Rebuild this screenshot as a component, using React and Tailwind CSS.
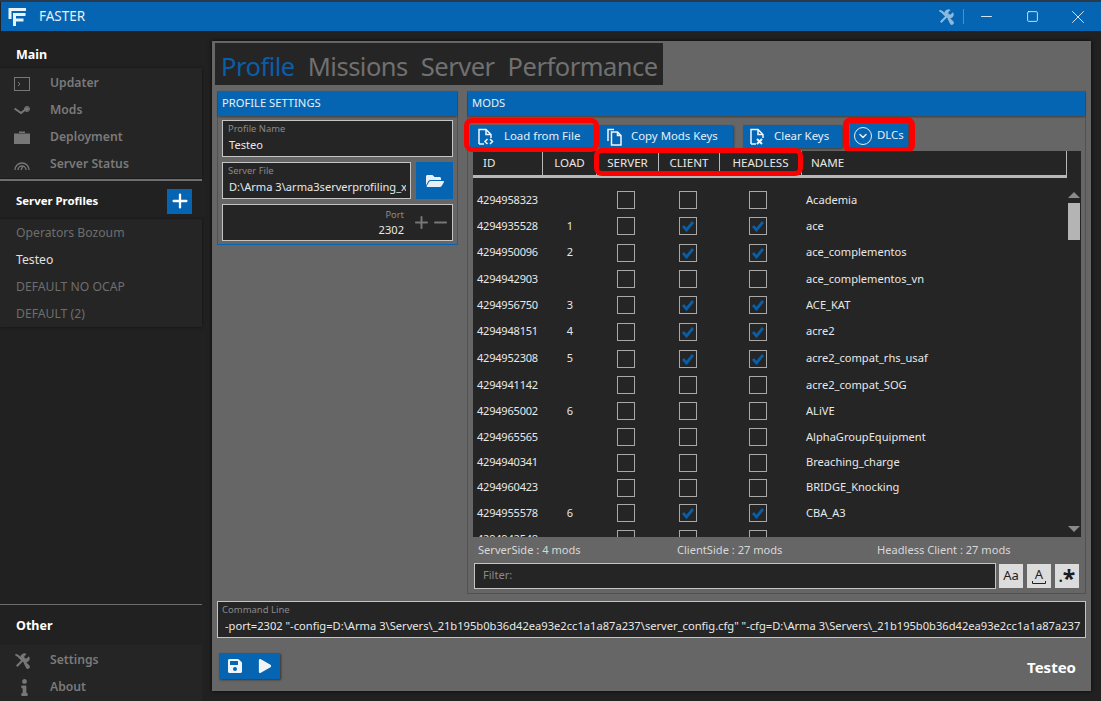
import { FaSave, FaPlay, FaFolderOpen, FaInfo } from "react-icons/fa";
import { Minus, Square, X, Plus, ChevronDown } from "lucide-react";

const FONT = "font-['Noto_Sans','Open_Sans',sans-serif]";

const mods = [
  { id: "4294958323", row: "h-[26px]", load: "", client: false, headless: false, name: "Academia" },
  { id: "4294935528", row: "h-[26px]", load: "1", client: true, headless: true, name: "ace" },
  { id: "4294950096", row: "h-[27px]", load: "2", client: true, headless: true, name: "ace_complementos" },
  { id: "4294942903", row: "h-[26px]", load: "", client: false, headless: false, name: "ace_complementos_vn" },
  { id: "4294956750", row: "h-[26px]", load: "3", client: true, headless: true, name: "ACE_KAT" },
  { id: "4294948151", row: "h-[27px]", load: "4", client: true, headless: true, name: "acre2" },
  { id: "4294952308", row: "h-[27px]", load: "5", client: true, headless: true, name: "acre2_compat_rhs_usaf" },
  { id: "4294941142", row: "h-[26px]", load: "", client: false, headless: false, name: "acre2_compat_SOG" },
  { id: "4294965002", row: "h-[26px]", load: "6", client: false, headless: false, name: "ALiVE" },
  { id: "4294965565", row: "h-[26px]", load: "", client: false, headless: false, name: "AlphaGroupEquipment" },
  { id: "4294940341", row: "h-[25px]", load: "", client: false, headless: false, name: "Breaching_charge" },
  { id: "4294960423", row: "h-[25px]", load: "", client: false, headless: false, name: "BRIDGE_Knocking" },
  { id: "4294955578", row: "h-[26px]", load: "6", client: true, headless: true, name: "CBA_A3" },
  { id: "4294942548", row: "h-[26px]", load: "", client: false, headless: false, name: "cup_core" },
];

function ToolsIcon({ size, color }) {
  return (
    <svg width={size} height={size} viewBox="0 0 16 16" fill={color}>
      <path d="M.8 2L2 .8l3 1.4 5.2 5.2-1.6 1.6-5.2-5.2zM9.4 9.6l1.5-1.5 4.3 4.2a1.8 1.8 0 0 1-2.9 2.9z" />
      <path d="M2 12.4l5.4-5.4a4 4 0 0 1 5.2-6L10.300 3.300l.4 1.900 1.900.4 2.300-2.300a4 4 0 0 1-6 5.200L3.500 14z" />
    </svg>
  );
}

function Check({ on }) {
  return (
    <div className="w-[18px] h-[18px] border border-[#a8a8a8] flex items-center justify-center">
      {on && (
        <svg width="14" height="12" viewBox="0 0 14 12" fill="none" stroke="#0a5ea8" strokeWidth="2.8">
          <path d="M2 6l3.500 4L12 2" />
        </svg>
      )}
    </div>
  );
}

function DocIcon({ badge }) {
  return (
    <svg width="18" height="18" viewBox="0 0 18 18" fill="none" stroke="#f2f6fa" strokeWidth="1.5" className="shrink-0">
      <path d="M2 16V1.500h7l5 5V10M9 1.500v5h5M2 16h5" />
      {badge === "code" && <path d="M10.500 11l-2.500 2.500 2.500 2.500M13 11l2.500 2.500L13 16" />}
      {badge === "x" && <path d="M8 11l5 5M13 11l-5 5" strokeWidth="2" />}
    </svg>
  );
}

function CopyIcon() {
  return (
    <svg width="18" height="18" viewBox="0 0 18 18" fill="none" stroke="#f2f6fa" strokeWidth="1.5" className="shrink-0">
      <path d="M2 13V1.500h6M5.500 17V4h6l3.500 3.500V17zM11.500 4v3.500H15" />
    </svg>
  );
}

function Annotated({ className, frame, children }) {
  return (
    <div className={"relative " + className}>
      {children}
      <div className={"absolute border-[#fe0000] rounded-lg pointer-events-none " + frame} />
    </div>
  );
}

function ToolButton({ icon, label, className }) {
  return (
    <div className={"bg-[#0565b2] flex items-center text-[11.4px] text-[#e8eef5] shadow-[1px_1px_2px_rgba(0,0,0,0.4)] " + className}>
      {icon}
      <span className="-mt-[2px]">{label}</span>
    </div>
  );
}

function NavItem({ icon, label }) {
  return (
    <div className="h-[27px] flex items-center text-[#7a7a7a] text-[12.2px] font-semibold">
      <div className="w-[50px] pl-[14px] flex items-center">{icon}</div>
      <span>{label}</span>
    </div>
  );
}

function PanelHeader({ title }) {
  return (
    <div className="h-[25px] bg-[#0565b2] text-[#e8eef5] text-[11.2px] pl-[4px] flex items-center shrink-0 shadow-[0_1px_2px_rgba(0,0,0,0.4)]">
      {title}
    </div>
  );
}

function Field({ label, value, className }) {
  return (
    <div className={"h-[37px] bg-[#252525] border border-[#c4c4c4] pl-[5px] pr-[4px] overflow-hidden " + className}>
      <div className="text-[9.4px] leading-[13px] mt-[1px] text-[#8a8a8a]">{label}</div>
      <div className="text-[11.1px] leading-[17px] mt-[1px] pl-[1px] text-[#e8e8e8] whitespace-nowrap overflow-hidden">{value}</div>
    </div>
  );
}

function Sidebar() {
  return (
    <div className="w-[212px] shrink-0 flex flex-col pt-[14px]">
      <div className="h-[21px] pl-[16px] text-[12.5px] font-bold text-white flex items-center">Main</div>
      <div className="mt-[2px] w-[202px] h-[110px] bg-[#252525] pt-[2px] shadow-[0_0_3px_rgba(0,0,0,0.5)]">
        <NavItem label="Updater" icon={
          <svg width="16" height="14" viewBox="0 0 16 14" fill="none" stroke="#777" strokeWidth="1"><rect x=".5" y=".5" width="15" height="13" /><path d="M4 5l2 2-2 2" /></svg>
        } />
        <NavItem label="Mods" icon={
          <svg width="16" height="9" viewBox="0 0 16 9" fill="none" stroke="#777" strokeWidth="2"><path d="M.5 2.500L7 7l5-4" /><circle cx="13" cy="3" r="2" fill="#777" stroke="none" /><circle cx="13" cy="3" r="2.500" strokeWidth="1" /></svg>
        } />
        <NavItem label="Deployment" icon={
          <svg width="16" height="13" viewBox="0 0 16 13" fill="#777"><path d="M5 2V.500h6V2zM0 2.500h16V13H0z" /></svg>
        } />
        <NavItem label="Server Status" icon={
          <svg width="16" height="12" viewBox="0 0 16 12" fill="none" stroke="#777" strokeWidth="1.4"><path d="M1 11a7 7 0 1 1 14 0M4 11a4 4 0 0 1 8 0" /><path d="M7 11l1.500-3" /></svg>
        } />
      </div>
      <div className="mt-[1px] w-[202px] h-[2px] bg-[#6e6e6e]" />
      <div className="mt-[7px] w-[202px] h-[26px] pl-[16px] pr-[10px] flex items-center justify-between">
        <span className="text-[11.4px] font-bold text-white">Server Profiles</span>
        <div className="w-[25px] h-[25px] bg-[#0565b2] flex items-center justify-center">
          <Plus size={22} strokeWidth={2.5} color="#fff" />
        </div>
      </div>
      <div className="mt-[5px] w-[202px] h-[108px] bg-[#252525] pl-[16px] pt-[1px] text-[12.2px] text-[#6e6e6e] shadow-[0_0_3px_rgba(0,0,0,0.5)]">
        <div className="h-[27px] flex items-center">Operators Bozoum</div>
        <div className="h-[27px] flex items-center text-[#e0e0e0]">Testeo</div>
        <div className="h-[27px] flex items-center">DEFAULT NO OCAP</div>
        <div className="h-[27px] flex items-center">DEFAULT (2)</div>
      </div>
      <div className="flex-1" />
      <div className="w-[202px] h-[1px] bg-[#6e6e6e]" />
      <div className="h-[40px] pl-[16px] pt-[3px] text-[12.5px] font-bold text-white flex items-center">Other</div>
      <div className="w-[202px] h-[56px] bg-[#252525] pt-[2px]">
        <NavItem label="Settings" icon={<ToolsIcon size={16} color="#777" />} />
        <NavItem label="About" icon={<div className="pl-[2px]"><FaInfo size={17} color="#777" /></div>} />
      </div>
    </div>
  );
}

function ProfileSettings() {
  return (
    <div className="w-[241px] h-[154px] border border-t-0 border-[#0565b2] shrink-0 flex flex-col">
      <PanelHeader title="PROFILE SETTINGS" />
      <div className="px-[4px] pt-[4px] flex flex-col gap-[5px]">
        <Field label="Profile Name" value="Testeo" />
        <div className="flex gap-[5px]">
          <Field label="Server File" value="D:\Arma 3\arma3serverprofiling_x64.exe" className="flex-1 min-w-0" />
          <div className="w-[37px] h-[37px] bg-[#0565b2] flex items-center justify-center">
            <FaFolderOpen size={18} color="#e8eef5" />
          </div>
        </div>
        <div className="h-[37px] bg-[#252525] border border-[#c4c4c4] flex justify-end items-center pr-[2px]">
          <div className="text-right pr-[8px]">
            <div className="text-[9.4px] leading-[13px] text-[#8a8a8a]">Port</div>
            <div className="text-[11.1px] leading-[17px] text-[#e8e8e8]">2302</div>
          </div>
          <Plus size={19} strokeWidth={2.5} color="#777" />
          <Minus size={19} strokeWidth={2.5} color="#777" />
        </div>
      </div>
    </div>
  );
}

function ModsTable() {
  return (
    <div className="ml-[5px] mr-[4px] h-[386px] bg-[#252525] flex flex-col overflow-hidden relative text-[#e8e8e8] shrink-0">
      <div className="w-[594px] h-[27px] shrink-0 flex border-b-[3px] border-b-[#b8b8b8] border-r border-r-[#b8b8b8] text-[11.6px]">
        <div className="w-[70px] pl-[10px] border-r border-[#b8b8b8] flex items-center">ID</div>
        <div className="w-[54px] text-center border-r border-[#b8b8b8] flex items-center justify-center">LOAD</div>
        <div className="flex w-[204px]">
          <div className="w-[62px] border-r border-[#b8b8b8] flex items-center justify-center">SERVER</div>
          <div className="w-[61px] border-r border-[#b8b8b8] flex items-center justify-center">CLIENT</div>
          <div className="w-[81px] flex items-center justify-center">HEADLESS</div>
        </div>
        <div className="flex-1 pl-[9px] border-l border-[#b8b8b8] flex items-center">NAME</div>
      </div>
      <div className="flex-1 overflow-hidden pt-[9px]">
        {mods.map((m) => (
          <div key={m.id} className={"grid grid-cols-[70px_54px_58px_66px_74px_1fr] items-center " + m.row}>
            <div className="pl-[4px] text-[11px] tracking-[-0.2px]">{m.id}</div>
            <div className="text-center text-[11px]">{m.load}</div>
            <div className="flex justify-center"><Check /></div>
            <div className="flex justify-center"><Check on={m.client} /></div>
            <div className="flex justify-center"><Check on={m.headless} /></div>
            <div className="pl-[11px] text-[11.1px]">{m.name}</div>
          </div>
        ))}
      </div>
      {/* scrollbar */}
      <div className="absolute right-[1px] top-[41px] bottom-[5px] w-[13px] flex flex-col items-center">
        <div className="w-0 h-0 border-x-[6px] border-x-transparent border-b-[6px] border-b-[#8a8a8a]" />
        <div className="w-[12px] h-[37px] mt-[5px] bg-[#b4b4b4]" />
        <div className="flex-1" />
        <div className="w-0 h-0 border-x-[6px] border-x-transparent border-t-[6px] border-t-[#8a8a8a]" />
      </div>
    </div>
  );
}

function ModsPanel() {
  return (
    <div className="flex-1 h-[503px] border border-t-0 border-[#0565b2] flex flex-col relative">
      <PanelHeader title="MODS" />
      <div className="flex items-start h-[35px] pl-[2px] pt-[9px] shrink-0">
        <Annotated frame="-left-[6px] -right-[4px] -top-[7px] -bottom-[4px] border-[5px] z-10">
          <ToolButton className="h-[23px] w-[125px] pl-[7px] gap-[9px]" icon={<DocIcon badge="code" />} label="Load from File" />
        </Annotated>
        <ToolButton className="h-[23px] ml-[4px] w-[134px] pl-[7px] gap-[7px]" icon={<CopyIcon />} label="Copy Mods Keys" />
        <ToolButton className="h-[23px] ml-[10px] w-[99px] pl-[6px] gap-[7px]" icon={<DocIcon badge="x" />} label="Clear Keys" />
        <Annotated className="ml-[8px] -mt-[2px]" frame="-left-[7px] -right-[7px] -top-[6px] -bottom-[6px] border-[6px]">
          <ToolButton className="h-[24px] w-[58px] pl-[4px] pt-[2px] gap-[5px]" icon={
            <div className="w-[18px] h-[18px] rounded-full border border-[#e8eef5] flex items-center justify-center">
              <ChevronDown size={12} strokeWidth={3} color="#e8eef5" />
            </div>
          } label="DLCs" />
        </Annotated>
      </div>
      {/* red frame over the SERVER / CLIENT / HEADLESS headers */}
      <div className="absolute left-[126px] top-[57px] w-[209px] h-[28px] border-[5px] border-[#fe0000] rounded-lg z-10" />
      <ModsTable />
      <div className="h-[26px] ml-[10px] flex items-center text-[11.1px] text-[#d8d8d8] shrink-0">
        <span className="w-[199px]">ServerSide : 4 mods</span>
        <span className="w-[200px]">ClientSide : 27 mods</span>
        <span>Headless Client : 27 mods</span>
      </div>
      <div className="ml-[6px] flex h-[26px] items-center">
        <div className="w-[522px] h-[26px] bg-[#252525] border border-[#c4c4c4] pl-[8px] pb-[2px] flex items-center text-[11.1px] text-[#8a8a8a]">Filter:</div>
        <div className="w-[24px] h-[24px] ml-[3px] bg-[#dcdcdc] flex items-center justify-center text-[13px] text-[#222]">Aa</div>
        <div className="w-[24px] h-[24px] ml-[4px] bg-[#dcdcdc] flex flex-col items-center justify-center text-[13px] leading-[13px] text-[#222]">
          <span>A</span>
          <svg width="14" height="3" viewBox="0 0 14 3" fill="none" stroke="#222"><path d="M.5 0v2.500h13V0" /></svg>
        </div>
        <div className="w-[24px] h-[24px] ml-[4px] bg-[#dcdcdc] flex items-center justify-center font-bold text-[#1c1c1c]">
          <span className="text-[14px] leading-[14px] self-end mb-[4px]">.</span>
          <span className="text-[23px] leading-[23px] mt-[5px]">*</span>
        </div>
      </div>
    </div>
  );
}

export default function App() {
  return (
    <div className={"w-[1101px] h-[701px] bg-[#212121] flex flex-col overflow-hidden " + FONT}>
      <div className="h-[2px] bg-[#2a3a48] shrink-0" />
      <div className="h-[29px] ml-[1px] bg-[#0565b2] flex items-center shrink-0 text-white">
        <svg width="20" height="20" viewBox="0 0 20 20" className="ml-[7px]" fill="none" stroke="#eaf2f9" strokeWidth="3">
          <path d="M2 12V2.500h16M6.500 19V7.500h11M6.500 13h9" />
        </svg>
        <span className="ml-[11px] text-[13.5px] text-[#e8eef5]">FASTER</span>
        <div className="flex-1" />
        <ToolsIcon size={16} color="#8db9dc" />
        <div className="ml-[9px] w-[1px] h-[15px] bg-[#4d8fc6]" />
        <Minus size={17} strokeWidth={1.3} color="#e8eef5" className="ml-[14px]" />
        <Square size={13} strokeWidth={1.6} color="#e8eef5" className="ml-[31px]" />
        <X size={22} strokeWidth={1} color="#e8eef5" className="ml-[28px] mr-[12px]" />
      </div>
      <div className="flex-1 flex min-h-0">
        <Sidebar />
        <div className="mt-[10px] mb-[10px] w-[879px] bg-[#666] flex flex-col pl-[3px] pt-[2px] pr-[5px] shadow-[0_0_4px_rgba(0,0,0,0.8)]">
          <div className="w-[448px] h-[42px] bg-[#252525] flex items-center pl-[6px] pt-[4px] gap-[13px] text-[25.5px] tracking-[-0.5px] text-[#707070] shrink-0">
            <span className="text-[#0a5ea8]">Profile</span>
            <span>Missions</span>
            <span>Server</span>
            <span>Performance</span>
          </div>
          <div className="flex gap-[9px] mt-[6px] pl-[2px]">
            <ProfileSettings />
            <ModsPanel />
          </div>
          <div className="mt-[7px] ml-[2px] h-[37px] bg-[#252525] border border-[#c4c4c4] pl-[4px] overflow-hidden shrink-0">
            <div className="text-[9.5px] leading-[13px] mt-[1px] text-[#8a8a8a]">Command Line</div>
            <div className="text-[11.15px] leading-[17px] mt-[1px] pl-[3px] text-[#e8e8e8] whitespace-nowrap">-port=2302 "-config=D:\Arma 3\Servers\_21b195b0b36d42ea93e2cc1a1a87a237\server_config.cfg" "-cfg=D:\Arma 3\Servers\_21b195b0b36d42ea93e2cc1a1a87a237</div>
          </div>
          <div className="flex items-center justify-between mt-[15px] ml-[4px] pr-[10px]">
            <div className="w-[61px] h-[26px] bg-[#0565b2] flex items-center pl-[8px] gap-[15px] shadow-[1px_1px_2px_rgba(0,0,0,0.5)]">
              <FaSave size={16} color="#f0f4f8" />
              <FaPlay size={14} color="#f0f4f8" />
            </div>
            <span className="text-[15px] font-bold text-white mt-[2px]">Testeo</span>
          </div>
        </div>
      </div>
    </div>
  );
}
